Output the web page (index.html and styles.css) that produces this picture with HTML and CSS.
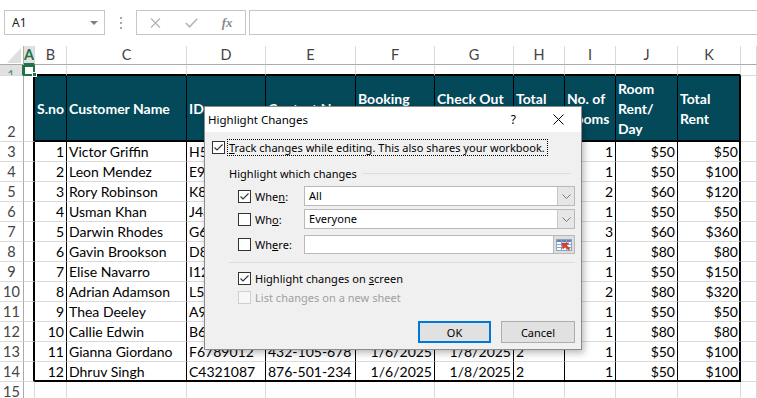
FILE: index.html
```html
<!DOCTYPE html>
<html>
<head>
<meta charset="utf-8">
<title>Highlight Changes</title>
<link rel="stylesheet" href="styles.css">
</head>
<body>
<div class="fbar">
  <div class="namebox"><span>A1</span><span class="caret"></span></div>
  <div class="dots"><i></i><i></i><i></i></div>
  <div class="fbtns">
    <span class="slot"><svg width="11" height="10" viewBox="0 0 11 10"><path d="M1 0.5 L10 9.5 M10 0.5 L1 9.5" stroke="#b4b4b4" stroke-width="1.3" fill="none"/></svg></span>
    <span class="slot"><svg width="13" height="10" viewBox="0 0 13 10"><path d="M0.8 5 L4.6 8.8 L12.2 0.8" stroke="#b4b4b4" stroke-width="1.6" fill="none"/></svg></span>
    <span class="slot fx">fx</span>
  </div>
  <div class="finput"></div>
</div>

<div class="sheet">
  <div class="corner"><svg width="14" height="15" viewBox="0 0 14 15"><polygon points="14,0 14,15 0,15" fill="#dfdfdf"/></svg></div>
  <div class="ch sel">A</div><div class="ch">B</div><div class="ch">C</div><div class="ch">D</div><div class="ch">E</div><div class="ch">F</div><div class="ch">G</div><div class="ch">H</div><div class="ch">I</div><div class="ch">J</div><div class="ch">K</div><div class="ch"></div>

  <div class="rh sel">1</div><div class="a1"><span class="selbox"></span><span class="handle"></span></div><div class="t"></div><div class="t"></div><div class="t"></div><div class="t"></div><div class="t"></div><div class="t"></div><div class="t"></div><div class="t"></div><div class="t"></div><div class="t"></div><div></div>

  <div class="rh">2</div><div class="a"></div>
  <div class="h">S.no</div><div class="h">Customer Name</div><div class="h">ID</div><div class="h">Contact No</div><div class="h">Booking<br>Date</div><div class="h">Check Out<br>Date</div><div class="h">Total<br>Days</div><div class="h">No. of<br>Rooms</div><div class="h">Room<br>Rent/<br>Day</div><div class="h k">Total<br>Rent</div><div></div>

  <div class="rh">3</div><div class="a"></div><div class="d r">1</div><div class="d">Victor Griffin</div><div class="d">H5678901</div><div class="d">123-456-789</div><div class="d r">1/6/2025</div><div class="d r">1/7/2025</div><div class="d">1</div><div class="d r">1</div><div class="d r">$50</div><div class="d r k">$50</div><div></div>
  <div class="rh">4</div><div class="a"></div><div class="d r">2</div><div class="d">Leon Mendez</div><div class="d">E9876543</div><div class="d">234-567-890</div><div class="d r">1/6/2025</div><div class="d r">1/8/2025</div><div class="d">2</div><div class="d r">1</div><div class="d r">$50</div><div class="d r k">$100</div><div></div>
  <div class="rh">5</div><div class="a"></div><div class="d r">3</div><div class="d">Rory Robinson</div><div class="d">K8765432</div><div class="d">345-678-901</div><div class="d r">1/6/2025</div><div class="d r">1/7/2025</div><div class="d">1</div><div class="d r">2</div><div class="d r">$60</div><div class="d r k">$120</div><div></div>
  <div class="rh">6</div><div class="a"></div><div class="d r">4</div><div class="d">Usman Khan</div><div class="d">J4321098</div><div class="d">456-789-012</div><div class="d r">1/6/2025</div><div class="d r">1/7/2025</div><div class="d">1</div><div class="d r">1</div><div class="d r">$50</div><div class="d r k">$50</div><div></div>
  <div class="rh">7</div><div class="a"></div><div class="d r">5</div><div class="d">Darwin Rhodes</div><div class="d">G6543210</div><div class="d">567-890-123</div><div class="d r">1/6/2025</div><div class="d r">1/8/2025</div><div class="d">2</div><div class="d r">3</div><div class="d r">$60</div><div class="d r k">$360</div><div></div>
  <div class="rh">8</div><div class="a"></div><div class="d r">6</div><div class="d">Gavin Brookson</div><div class="d">D8765432</div><div class="d">678-901-234</div><div class="d r">1/6/2025</div><div class="d r">1/7/2025</div><div class="d">1</div><div class="d r">1</div><div class="d r">$80</div><div class="d r k">$80</div><div></div>
  <div class="rh">9</div><div class="a"></div><div class="d r">7</div><div class="d">Elise Navarro</div><div class="d">I1234567</div><div class="d">789-012-345</div><div class="d r">1/6/2025</div><div class="d r">1/9/2025</div><div class="d">3</div><div class="d r">1</div><div class="d r">$50</div><div class="d r k">$150</div><div></div>
  <div class="rh">10</div><div class="a"></div><div class="d r">8</div><div class="d">Adrian Adamson</div><div class="d">L5432109</div><div class="d">890-123-456</div><div class="d r">1/6/2025</div><div class="d r">1/8/2025</div><div class="d">2</div><div class="d r">2</div><div class="d r">$80</div><div class="d r k">$320</div><div></div>
  <div class="rh">11</div><div class="a"></div><div class="d r">9</div><div class="d">Thea Deeley</div><div class="d">A9876543</div><div class="d">901-234-567</div><div class="d r">1/6/2025</div><div class="d r">1/7/2025</div><div class="d">1</div><div class="d r">1</div><div class="d r">$50</div><div class="d r k">$50</div><div></div>
  <div class="rh">12</div><div class="a"></div><div class="d r">10</div><div class="d">Callie Edwin</div><div class="d">B6789012</div><div class="d">321-654-987</div><div class="d r">1/6/2025</div><div class="d r">1/7/2025</div><div class="d">1</div><div class="d r">1</div><div class="d r">$80</div><div class="d r k">$80</div><div></div>
  <div class="rh">13</div><div class="a"></div><div class="d r">11</div><div class="d">Gianna Giordano</div><div class="d">F6789012</div><div class="d">432-105-678</div><div class="d r">1/6/2025</div><div class="d r">1/8/2025</div><div class="d">2</div><div class="d r">1</div><div class="d r">$50</div><div class="d r k">$100</div><div></div>
  <div class="rh">14</div><div class="a"></div><div class="d r b">12</div><div class="d b">Dhruv Singh</div><div class="d b">C4321087</div><div class="d b">876-501-234</div><div class="d r b">1/6/2025</div><div class="d r b">1/8/2025</div><div class="d b">2</div><div class="d r b">1</div><div class="d r b">$50</div><div class="d r k b">$100</div><div></div>
  <div class="rh">15</div><div></div><div></div><div></div><div></div><div></div><div></div><div></div><div></div><div></div><div></div><div></div><div></div>
</div>

<div class="dlg">
  <div class="dlg-title">
    <span class="dlg-name">Highlight Changes</span>
    <span class="dlg-help">?</span>
    <svg class="dlg-close" width="11" height="11" viewBox="0 0 11 11"><path d="M0.5 0.5 L10.5 10.5 M10.5 0.5 L0.5 10.5" stroke="#000" stroke-width="1" fill="none"/></svg>
  </div>
  <div class="dlg-body">
    <div class="track">
      <span class="cb"><svg width="11" height="11" viewBox="0 0 11 11"><path d="M1.5 5.5 L4 8 L9.5 2.5" stroke="#333" stroke-width="1.1" fill="none"/></svg></span>
      <span class="focus"><u>T</u>rack changes while editing. This also shares your workbook.</span>
    </div>
    <div class="group"><span>Highlight which changes</span><span class="rule"></span></div>
    <div class="frow when">
      <span class="cb"><svg width="11" height="11" viewBox="0 0 11 11"><path d="M1.5 5.5 L4 8 L9.5 2.5" stroke="#333" stroke-width="1.1" fill="none"/></svg></span>
      <span class="lbl">Whe<u>n</u>:</span>
      <div class="combo"><span class="val">All</span><span class="dd"><svg width="9" height="5" viewBox="0 0 9 5"><path d="M0.5 0.5 L4.5 4.5 L8.5 0.5" stroke="#777" stroke-width="1" fill="none"/></svg></span></div>
    </div>
    <div class="frow who">
      <span class="cb"></span>
      <span class="lbl">Wh<u>o</u>:</span>
      <div class="combo"><span class="val">Everyone</span><span class="dd"><svg width="9" height="5" viewBox="0 0 9 5"><path d="M0.5 0.5 L4.5 4.5 L8.5 0.5" stroke="#777" stroke-width="1" fill="none"/></svg></span></div>
    </div>
    <div class="frow where">
      <span class="cb"></span>
      <span class="lbl">Wh<u>e</u>re:</span>
      <div class="refedit"><span class="field"></span><span class="refbtn"><svg width="16" height="12" viewBox="0 0 16 12"><rect x="0.5" y="0.5" width="15" height="11" fill="#fff" stroke="#8aa4c4"/><rect x="1" y="1" width="14" height="2" fill="#5b87c5"/><path d="M0.5 5.5 H15.5 M0.5 8.5 H15.5 M5.5 0.5 V11.5 M10.5 0.5 V11.5" stroke="#8aa4c4" stroke-width="1"/><path d="M6 4 L13 4 L10.5 6.2 L14 9.7 L12.5 11 L9 7.6 L7 10 Z" fill="#e0402a" stroke="#b02a18" stroke-width="0.5"/></svg></span></div>
    </div>
    <div class="sep"></div>
    <div class="opt">
      <span class="cb"><svg width="11" height="11" viewBox="0 0 11 11"><path d="M1.5 5.5 L4 8 L9.5 2.5" stroke="#333" stroke-width="1.1" fill="none"/></svg></span>
      <span>Highlight changes on <u>s</u>creen</span>
    </div>
    <div class="opt dis">
      <span class="cb"></span>
      <span>List changes on a new sheet</span>
    </div>
    <div class="btns">
      <button class="btn ok">OK</button>
      <button class="btn">Cancel</button>
    </div>
  </div>
</div>
</body>
</html>
```

FILE: styles.css
```css
* { box-sizing: border-box; }
html, body { margin: 0; padding: 0; background: #fff; }
body {
  width: 757px;
  height: 398px;
  overflow: hidden;
  position: relative;
  font-family: Lato, "Liberation Sans", sans-serif;
}

/* formula bar */
.fbar {
  height: 46px;
  display: flex;
  align-items: flex-start;
  padding: 10px 0 0 4px;
}
.namebox {
  width: 101px;
  height: 25px;
  border: 1px solid #c6c6c6;
  display: flex;
  align-items: center;
  justify-content: space-between;
  padding: 0 6px 0 7px;
  font: 12px "Noto Sans", sans-serif;
  color: #222;
}
.caret {
  width: 0; height: 0;
  border-left: 4px solid transparent;
  border-right: 4px solid transparent;
  border-top: 4px solid #808080;
}
.dots {
  width: 31px;
  height: 25px;
  display: flex;
  flex-direction: column;
  align-items: center;
  gap: 3px;
  padding-top: 7px;
}
.dots i { width: 2px; height: 2px; background: #a8a8a8; }
.fbtns {
  width: 110px;
  height: 25px;
  border: 1px solid #c6c6c6;
  display: flex;
  align-items: center;
  padding-left: 1px;
}
.slot { width: 36px; display: flex; justify-content: center; align-items: center; }
.fx {
  font: italic bold 13px "Liberation Serif", serif;
  color: #8a8a8a;
}
.finput {
  flex: 1;
  height: 25px;
  margin-left: 3px;
  border: 1px solid #c6c6c6;
  border-right: none;
}

/* sheet grid */
.sheet {
  display: grid;
  grid-template-columns: 24px 11px 32px 120px 79px 90px 79px 79px 51px 51px 62px 63px 1fr;
  grid-template-rows: 19px 11px 66px repeat(12, 20px) 20px;
  font-size: 14px;
  color: #000;
}
.sheet > div {
  border-right: 1px solid #dadada;
  border-bottom: 1px solid #dadada;
  overflow: hidden;
  white-space: nowrap;
  line-height: 19px;
  padding: 0 2px;
}
.sheet > .corner {
  display: flex;
  align-items: flex-end;
  justify-content: flex-end;
  padding: 0 2px 1px 0;
  border-bottom-color: #ababab;
  border-right-color: #ababab;
}
.sheet > .ch {
  color: #444;
  font-size: 14.5px;
  text-align: center;
  line-height: 18px;
  border-bottom-color: #ababab;
  padding: 0;
}
.sheet > .ch.sel {
  background: #e1e1e1;
  color: #217346;
  font-weight: bold;
  border-bottom: 2px solid #217346;
  line-height: 17px;
}
.sheet > .rh {
  color: #444;
  font-size: 14.5px;
  display: flex;
  align-items: flex-end;
  justify-content: center;
  border-right-color: #ababab;
  padding: 0;
}
.sheet > .rh.sel {
  background: #e1e1e1;
  color: #5f8f70;
  border-right: 2px solid #217346;
  font-size: 13px;
  line-height: 20px;
  align-items: flex-start;
}
.sheet > .a1 {
  position: relative;
  overflow: visible;
}
.selbox {
  position: absolute;
  left: -1px;
  top: 0;
  width: 12px;
  height: 11px;
  border: 2px solid #217346;
}
.handle {
  position: absolute;
  left: 8px;
  top: 7px;
  width: 5px;
  height: 5px;
  background: #217346;
  border: 1px solid #fff;
}
.sheet > .t { border-bottom: 2px solid #000; }
.sheet > .a { border-right: 2px solid #000; }
.sheet > .h {
  background: #03495a;
  color: #fff;
  font-weight: bold;
  white-space: normal;
  line-height: 20px;
  display: flex;
  align-items: center;
  padding: 2px 2px 0;
  border-right: 1px solid #000;
  border-bottom: 2px solid #000;
}
.sheet > .d { border-right: 1px solid #000; }
.sheet > .r { text-align: right; }
.sheet > .k { border-right-width: 2px; padding-right: 1px; }
.sheet > .b { border-bottom: 2px solid #000; }

/* dialog */
.dlg {
  position: absolute;
  left: 204px;
  top: 106px;
  width: 378px;
  height: 244px;
  border: 1px solid #8c8c8c;
  background: #f0f0f0;
  box-shadow: 2px 3px 7px rgba(0, 0, 0, 0.28);
  font: 11px "Noto Sans", sans-serif;
  letter-spacing: 0.03px;
  color: #000;
}
.dlg-title {
  height: 25px;
  background: #fff;
  display: flex;
  align-items: center;
  padding-left: 3px;
}
.dlg-name { font-size: 11.5px; letter-spacing: 0; }
.dlg-help { margin-left: auto; margin-right: 37px; font-size: 12px; }
.dlg-close { margin-right: 17px; }
.dlg-body { padding: 0 6px 0 7px; }
.cb {
  width: 13px;
  height: 13px;
  flex: none;
  border: 1px solid #333;
  background: #fff;
  display: flex;
  align-items: center;
  justify-content: center;
}
.track {
  margin-top: 7px;
  height: 17px;
  display: flex;
  align-items: center;
  gap: 2px;
}
.focus {
  height: 17px;
  line-height: 15px;
  border: 1px dotted #000;
  padding: 0 2px 0 1px;
}
.group {
  margin: 9px 0 0 17px;
  height: 16px;
  display: flex;
  align-items: center;
}
.rule {
  flex: 1;
  height: 1px;
  background: #dcdcdc;
  margin: 0 4px 0 6px;
}
.frow {
  margin-left: 26px;
  display: flex;
  align-items: center;
}
.frow .lbl { width: 53px; padding-left: 4px; }
.when { margin-top: 5px; height: 20px; }
.who { margin-top: 3px; height: 20px; }
.where { margin-top: 6px; height: 19px; }
.combo, .refedit {
  flex: 1;
  height: 100%;
  display: flex;
  border: 1px solid #b9b9b9;
  background: #fff;
}
.combo .val { flex: 1; padding-left: 4px; line-height: 18px; }
.combo .dd {
  width: 17px;
  background: #e6e6e6;
  border-left: 1px solid #c8c8c8;
  display: flex;
  align-items: center;
  justify-content: center;
}
.refedit .field { flex: 1; }
.refedit .refbtn {
  width: 21px;
  background: #dedede;
  border-left: 1px solid #b9b9b9;
  display: flex;
  align-items: center;
  justify-content: center;
}
.sep {
  margin: 8px 0 0 17px;
  height: 1px;
  background: #dcdcdc;
}
.opt {
  margin-left: 26px;
  height: 16px;
  display: flex;
  align-items: center;
  gap: 4px;
}
.sep + .opt { margin-top: 7px; }
.opt.dis { margin-top: 3px; color: #a0a0a0; }
.opt.dis .cb { border-color: #cfcfcf; background: #f7f7f7; }
.btns {
  margin-top: 16px;
  display: flex;
  justify-content: flex-end;
  gap: 10px;
}
.btn {
  height: 22px;
  width: 74px;
  background: #e1e1e1;
  border: 1px solid #adadad;
  font: 11px "Noto Sans", sans-serif;
  color: #000;
  padding: 0;
}
.btn.ok { width: 73px; border: 2px solid #0078d7; }
```
